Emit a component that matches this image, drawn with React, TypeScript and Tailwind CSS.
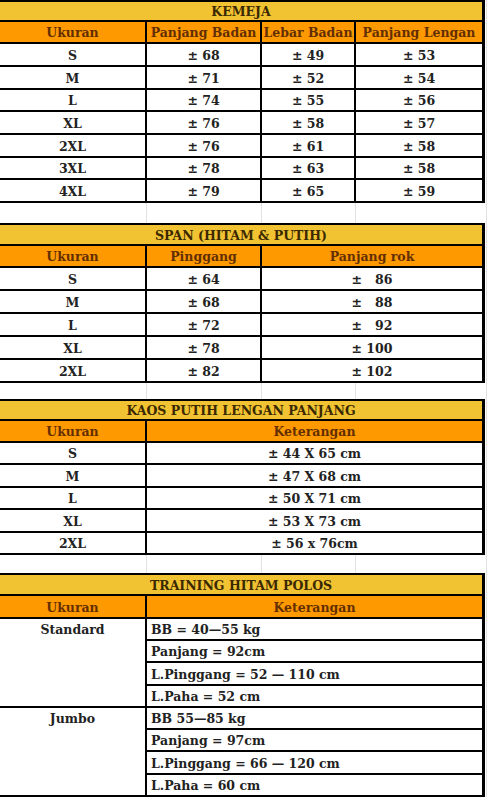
import React from "react";

const FONT = "font-['DejaVu_Serif',serif] font-bold text-[12.5px] leading-none";

const W4 = ["w-[147px] border-r-2", "w-[115px] border-r-2", "w-[94px] border-r-2", "flex-1"];
const W3 = ["w-[147px] border-r-2", "w-[115px] border-r-2", "flex-1"];
const W2 = ["w-[147px] border-r-2", "flex-1"];

function Title({ text, h }: { text: string; h: string }) {
  return (
    <div className={`${h} flex items-center justify-center pt-[3px] border-b-2 border-black bg-[#f1c232] text-[#3a2900]`}>
      {text}
    </div>
  );
}

function Row({
  cells,
  widths,
  h,
  header,
}: {
  cells: string[];
  widths: string[];
  h: string;
  header?: boolean;
}) {
  return (
    <div className={`${h} flex border-b-2 border-black ${header ? "bg-[#ff9900] text-[#632f00]" : "bg-white text-[#222222]"}`}>
      {cells.map((c, i) => (
        <div
          key={i}
          className={`${widths[i]} border-black flex items-center justify-center pt-[3px] whitespace-pre`}
        >
          {c}
        </div>
      ))}
    </div>
  );
}

function Blank({ h }: { h: string }) {
  return (
    <div className={`${h} flex`}>
      <div className="w-[147px] border-r border-[#e2e2e2]" />
      <div className="w-[115px] border-r border-[#e2e2e2]" />
      <div className="w-[94px] border-r border-[#e2e2e2]" />
      <div className="flex-1" />
    </div>
  );
}

function Table({ children }: { children: React.ReactNode }) {
  return <div className="w-[485px] border-t-2 border-r-[3px] border-black">{children}</div>;
}

function Group({ label, lines, hs }: { label: string; lines: string[]; hs: string[] }) {
  return (
    <div className="flex border-b-2 border-black">
      <div className="w-[147px] border-r-2 border-black bg-white text-[#222222]">
        <div className="h-[20px] flex items-center justify-center pt-[3px]">{label}</div>
      </div>
      <div className="flex-1 flex flex-col bg-white text-[#222222]">
        {lines.map((l, i) => (
          <div
            key={i}
            className={`${hs[i]} flex items-center pl-[4px] pt-[3px] whitespace-pre ${i < lines.length - 1 ? "border-b-2 border-black" : ""}`}
          >
            {l}
          </div>
        ))}
      </div>
    </div>
  );
}

export default function App() {
  const kemeja = [
    ["S", "± 68", "± 49", "± 53"],
    ["M", "± 71", "± 52", "± 54"],
    ["L", "± 74", "± 55", "± 56"],
    ["XL", "± 76", "± 58", "± 57"],
    ["2XL", "± 76", "± 61", "± 58"],
    ["3XL", "± 78", "± 63", "± 58"],
    ["4XL", "± 79", "± 65", "± 59"],
  ];
  const kh = ["h-[23px]", "h-[23px]", "h-[22px]", "h-[23px]", "h-[23px]", "h-[22px]", "h-[23px]"];
  const span = [
    ["S", "± 64", "±   86"],
    ["M", "± 68", "±   88"],
    ["L", "± 72", "±   92"],
    ["XL", "± 78", "± 100"],
    ["2XL", "± 82", "± 102"],
  ];
  const kaos = [
    ["S", "± 44 X 65 cm"],
    ["M", "± 47 X 68 cm"],
    ["L", "± 50 X 71 cm"],
    ["XL", "± 53 X 73 cm"],
    ["2XL", "± 56 x 76cm"],
  ];
  const kaosH = ["h-[22px]", "h-[23px]", "h-[22px]", "h-[23px]", "h-[22px]"];

  return (
    <div className={`min-h-[800px] bg-white ${FONT}`}>
      <div className="w-[487px] border-r border-[#e2e2e2] flex flex-col">
        <Table>
          <Title text="KEMEJA" h="h-[20px]" />
          <Row header h="h-[22px]" widths={W4} cells={["Ukuran", "Panjang Badan", "Lebar Badan", "Panjang Lengan"]} />
          {kemeja.map((r, i) => (
            <Row key={i} h={kh[i]} widths={W4} cells={r} />
          ))}
        </Table>
        <Blank h="h-[20px]" />
        <Table>
          <Title text="SPAN (HITAM & PUTIH)" h="h-[21px]" />
          <Row header h="h-[22px]" widths={W3} cells={["Ukuran", "Pinggang", "Panjang rok"]} />
          {span.map((r, i) => (
            <Row key={i} h="h-[23px]" widths={W3} cells={r} />
          ))}
        </Table>
        <Blank h="h-[16px]" />
        <Table>
          <Title text="KAOS PUTIH LENGAN PANJANG" h="h-[20px]" />
          <Row header h="h-[22px]" widths={W2} cells={["Ukuran", "Keterangan"]} />
          {kaos.map((r, i) => (
            <Row key={i} h={kaosH[i]} widths={W2} cells={r} />
          ))}
        </Table>
        <Blank h="h-[18px]" />
        <Table>
          <Title text="TRAINING HITAM POLOS" h="h-[21px]" />
          <Row header h="h-[23px]" widths={W2} cells={["Ukuran", "Keterangan"]} />
          <Group
            label="Standard"
            lines={["BB = 40—55 kg", "Panjang = 92cm", "L.Pinggang = 52 — 110 cm", "L.Paha = 52 cm"]}
            hs={["h-[22px]", "h-[22px]", "h-[23px]", "h-[20px]"]}
          />
          <Group
            label="Jumbo"
            lines={["BB 55—85 kg", "Panjang = 97cm", "L.Pinggang = 66 — 120 cm", "L.Paha = 60 cm"]}
            hs={["h-[22px]", "h-[22px]", "h-[23px]", "h-[20px]"]}
          />
        </Table>
      </div>
    </div>
  );
}
